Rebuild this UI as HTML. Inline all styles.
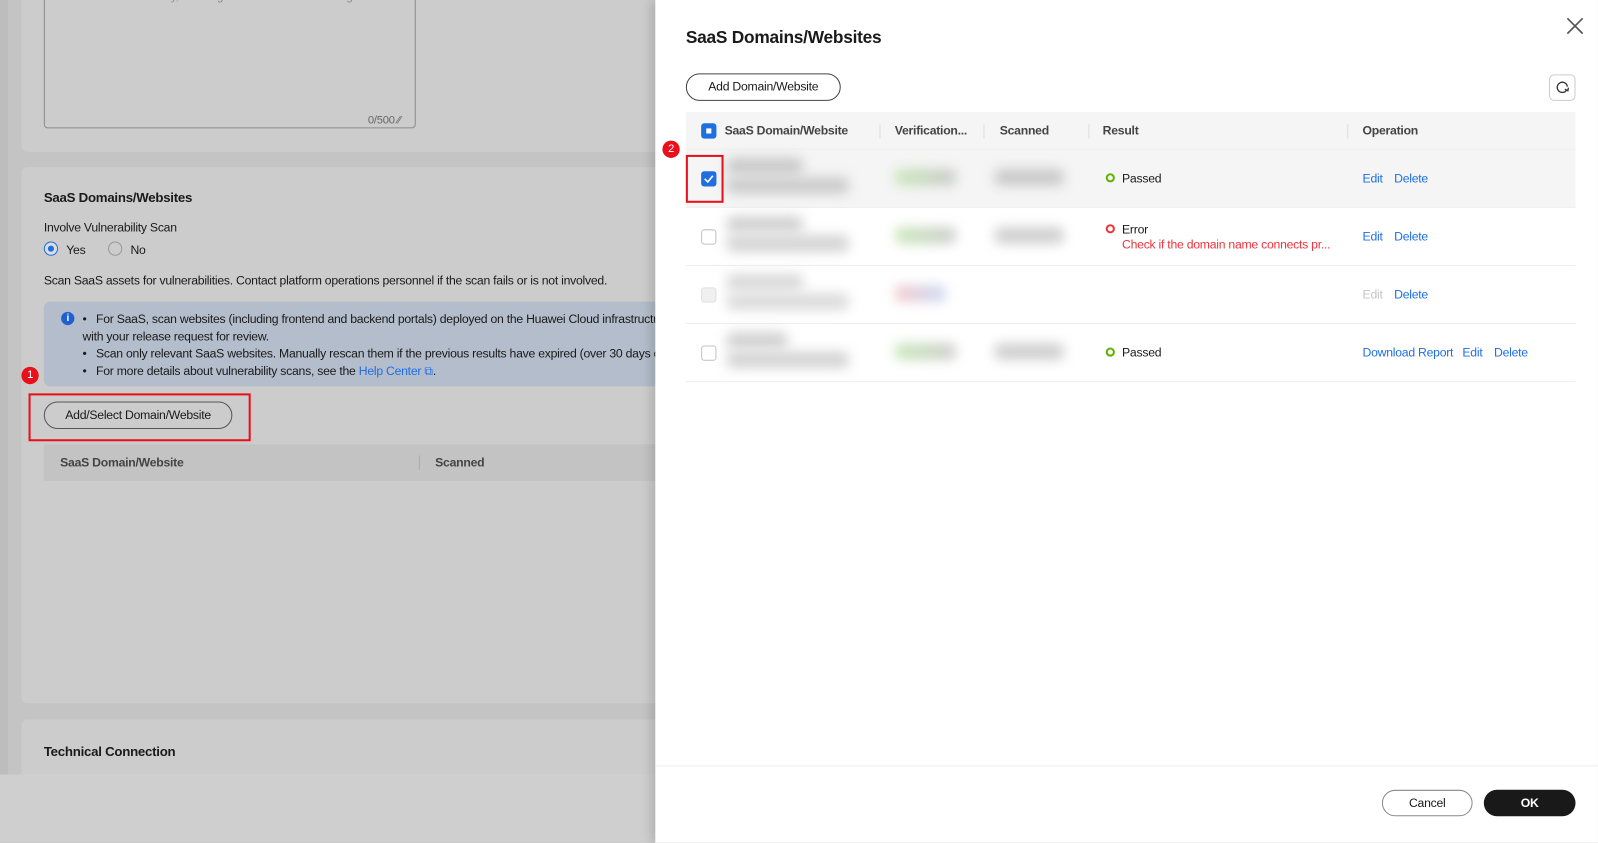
<!DOCTYPE html>
<html><head><meta charset="utf-8"><style>
*{box-sizing:border-box;margin:0;padding:0}
html,body{width:1598px;height:843px;overflow:hidden;background:#c4c4c4}
body{font-family:"Liberation Sans",Arial,sans-serif;font-size:12px;color:#1a1a1a;letter-spacing:-0.25px}
#w{position:absolute;left:0;top:0;width:1568px;height:827px;transform:scale(1.0191);transform-origin:0 0}
.a{position:absolute}
.card{position:absolute;left:21px;width:640px;background:#cccccc;border-radius:6px}
.t{position:absolute;white-space:nowrap}
.blur{position:absolute;filter:blur(6px);border-radius:6px}
.cb{position:absolute;width:15px;height:15px;border:1px solid #c2c2c2;border-radius:3px;background:#fff}
.link{color:#1f6fe0}
.sep{position:absolute;width:1px;height:14px;background:#ddd;top:12px}
</style></head><body><div id="w">
<div class="a" style="left:0;top:0;width:8px;height:827px;background:#bdbdbd"></div>
<!-- card1 -->
<div class="card" style="top:-10px;height:159px"></div>
<div class="a" style="left:43px;top:-10px;width:365px;height:136px;border:1px solid #8c8c8c;border-radius:4px"></div>
<div class="t" style="left:56px;top:-9px;color:#888;font-size:11px">Describe the asset briefly, including its core functions and usage.</div>
<div class="t" style="left:361px;top:112px;color:#666;font-size:11px">0/500 ⁄⁄</div>
<!-- card2 -->
<div class="card" style="top:164px;height:526px"></div>
<div class="t" style="left:43px;top:186px;font-weight:bold;font-size:13px">SaaS Domains/Websites</div>
<div class="t" style="left:43px;top:216px">Involve Vulnerability Scan</div>
<div class="a" style="left:43px;top:237px;width:14px;height:14px;border:1px solid #1f6fe0;border-radius:50%;background:#ddd"></div>
<div class="a" style="left:47px;top:241px;width:6px;height:6px;border-radius:50%;background:#1f6fe0"></div>
<div class="t" style="left:65px;top:238px">Yes</div>
<div class="a" style="left:106px;top:237px;width:14px;height:14px;border:1px solid #999;border-radius:50%"></div>
<div class="t" style="left:128px;top:238px">No</div>
<div class="t" style="left:43px;top:268px">Scan SaaS assets for vulnerabilities. Contact platform operations personnel if the scan fails or is not involved.</div>
<div class="a" style="left:43px;top:296px;width:610px;height:83px;background:#b3bdcb;border-radius:6px"></div>
<div class="a" style="left:60px;top:306px;width:13px;height:13px;border-radius:50%;background:#1f5fcf;color:#fff;font-size:10px;font-weight:bold;text-align:center;line-height:13px">i</div>
<div class="t" style="left:81px;top:306px">•&nbsp;&nbsp;&nbsp;For SaaS, scan websites (including frontend and backend portals) deployed on the Huawei Cloud infrastructure</div>
<div class="t" style="left:81px;top:323px">with your release request for review.</div>
<div class="t" style="left:81px;top:340px">•&nbsp;&nbsp;&nbsp;Scan only relevant SaaS websites. Manually rescan them if the previous results have expired (over 30 days old</div>
<div class="t" style="left:81px;top:357px">•&nbsp;&nbsp;&nbsp;For more details about vulnerability scans, see the <span class="link">Help Center ⧉</span>.</div>
<div class="a" style="left:21px;top:360px;width:17px;height:17px;border-radius:50%;background:#e8101a;color:#fff;font-size:11px;text-align:center;line-height:17px">1</div>
<div class="a" style="left:28px;top:386px;width:218px;height:47px;border:2px solid #e8101a"></div>
<div class="a" style="left:43px;top:394px;width:185px;height:27px;border:1px solid #555;border-radius:14px;text-align:center;line-height:25px">Add/Select Domain/Website</div>
<div class="a" style="left:43px;top:436px;width:610px;height:36px;background:#c3c3c3"></div>
<div class="t" style="left:59px;top:447px;font-weight:bold;color:#444">SaaS Domain/Website</div>
<div class="a" style="left:411px;top:447px;width:1px;height:14px;background:#aaa"></div>
<div class="t" style="left:427px;top:447px;font-weight:bold;color:#444">Scanned</div>
<!-- card3 -->
<div class="card" style="top:706px;height:60px"></div>
<div class="t" style="left:43px;top:730px;font-weight:bold;font-size:13px">Technical Connection</div>
<div class="a" style="left:0;top:760px;width:643px;height:67px;background:#cfcfcf"></div>
<!-- panel -->
<div class="a" style="left:643px;top:0;width:925px;height:827px;background:#fff;box-shadow:-4px 0 10px rgba(0,0,0,.15)"></div>
<div class="t" style="left:673px;top:27px;font-weight:bold;font-size:17px">SaaS Domains/Websites</div>
<svg class="a" style="left:1537px;top:17px" width="17" height="17"><path d="M1 1L16 16M16 1L1 16" stroke="#555" stroke-width="1.6"/></svg>
<div class="a" style="left:673px;top:72px;width:152px;height:27px;border:1px solid #444;border-radius:14px;text-align:center;line-height:25px">Add Domain/Website</div>
<div class="a" style="left:1520px;top:73px;width:26px;height:26px;border:1px solid #ccc;border-radius:5px"></div>
<svg class="a" style="left:1526px;top:79px" width="14" height="14"><path d="M11.5 9A5 5 0 1 1 12 6" fill="none" stroke="#333" stroke-width="1.3"/><path d="M9.5 8.5L12.5 10L13 7" fill="none" stroke="#333" stroke-width="1.3"/></svg>
<div class="a" style="left:673px;top:110px;width:873px;height:37px;background:#f5f5f5;border-bottom:1px solid #eee">
  <div class="a" style="left:15px;top:11px;width:15px;height:15px;background:#1f6fe0;border-radius:3px"></div>
  <div class="a" style="left:20px;top:16px;width:5px;height:5px;background:#fff"></div>
  <div class="t" style="left:38px;top:11px;font-weight:bold;color:#444">SaaS Domain/Website</div>
  <div class="sep" style="left:190px"></div>
  <div class="t" style="left:205px;top:11px;font-weight:bold;color:#444">Verification...</div>
  <div class="sep" style="left:292px"></div>
  <div class="t" style="left:308px;top:11px;font-weight:bold;color:#444">Scanned</div>
  <div class="sep" style="left:395px"></div>
  <div class="t" style="left:409px;top:11px;font-weight:bold;color:#444">Result</div>
  <div class="sep" style="left:649px"></div>
  <div class="t" style="left:664px;top:11px;font-weight:bold;color:#444">Operation</div>
</div>
<!-- rows -->
<div class="a" style="left:673px;top:147px;width:873px;height:57px;background:#f5f5f5;border-bottom:1px solid #eee"></div>
<div class="a" style="left:673px;top:204px;width:873px;height:57px;border-bottom:1px solid #eee"></div>
<div class="a" style="left:673px;top:261px;width:873px;height:57px;border-bottom:1px solid #eee"></div>
<div class="a" style="left:673px;top:318px;width:873px;height:57px;border-bottom:1px solid #eee"></div>
<!-- blurred blobs -->
<div class="blur" style="left:713px;top:155px;width:75px;height:16px;background:#c8c8c8"></div>
<div class="blur" style="left:713px;top:174px;width:120px;height:16px;background:#cacaca"></div>
<div class="blur" style="left:878px;top:166px;width:60px;height:16px;background:linear-gradient(90deg,#c8e8b8,#c8c8c8)"></div>
<div class="blur" style="left:976px;top:166px;width:68px;height:16px;background:#c8c8c8"></div>
<div class="blur" style="left:713px;top:212px;width:75px;height:16px;background:#d0d0d0"></div>
<div class="blur" style="left:713px;top:231px;width:120px;height:16px;background:#d2d2d2"></div>
<div class="blur" style="left:878px;top:223px;width:60px;height:16px;background:linear-gradient(90deg,#c8e8b8,#cccccc)"></div>
<div class="blur" style="left:976px;top:223px;width:68px;height:16px;background:#cecece"></div>
<div class="blur" style="left:713px;top:269px;width:75px;height:16px;background:#d8d8d8"></div>
<div class="blur" style="left:713px;top:288px;width:120px;height:16px;background:#dadada"></div>
<div class="blur" style="left:878px;top:280px;width:50px;height:16px;background:linear-gradient(90deg,#f4c8c8,#c8d8f6)"></div>
<div class="blur" style="left:713px;top:326px;width:60px;height:16px;background:#d0d0d0"></div>
<div class="blur" style="left:713px;top:345px;width:120px;height:16px;background:#d2d2d2"></div>
<div class="blur" style="left:878px;top:337px;width:60px;height:16px;background:linear-gradient(90deg,#c8e8b8,#cccccc)"></div>
<div class="blur" style="left:976px;top:337px;width:68px;height:16px;background:#cecece"></div>
<!-- checkboxes -->
<div class="a" style="left:688px;top:168px;width:15px;height:15px;background:#1f6fe0;border-radius:3px"></div>
<svg class="a" style="left:688px;top:168px" width="15" height="15"><path d="M3.5 7.5L6.5 10.5L11.5 4.5" fill="none" stroke="#fff" stroke-width="1.6"/></svg>
<div class="cb" style="left:688px;top:225px"></div>
<div class="cb" style="left:688px;top:282px;background:#f0f0f0;border-color:#e0e0e0"></div>
<div class="cb" style="left:688px;top:339px"></div>
<div class="a" style="left:673px;top:152px;width:37px;height:47px;border:2px solid #e8101a"></div>
<div class="a" style="left:650px;top:138px;width:17px;height:17px;border-radius:50%;background:#e8101a;color:#fff;font-size:11px;text-align:center;line-height:17px">2</div>
<!-- results -->
<div class="a" style="left:1085px;top:170px;width:9px;height:9px;border:2px solid #5cb300;border-radius:50%"></div>
<div class="t" style="left:1101px;top:168px">Passed</div>
<div class="a" style="left:1085px;top:220px;width:9px;height:9px;border:2px solid #f0343c;border-radius:50%"></div>
<div class="t" style="left:1101px;top:218px">Error</div>
<div class="t" style="left:1101px;top:233px;color:#f0343c">Check if the domain name connects pr...</div>
<div class="a" style="left:1085px;top:341px;width:9px;height:9px;border:2px solid #5cb300;border-radius:50%"></div>
<div class="t" style="left:1101px;top:339px">Passed</div>
<div class="t link" style="left:1337px;top:168px">Edit</div><div class="t link" style="left:1368px;top:168px">Delete</div>
<div class="t link" style="left:1337px;top:225px">Edit</div><div class="t link" style="left:1368px;top:225px">Delete</div>
<div class="t" style="left:1337px;top:282px;color:#c4c4c4">Edit</div><div class="t link" style="left:1368px;top:282px">Delete</div>
<div class="t link" style="left:1337px;top:339px">Download Report</div><div class="t link" style="left:1435px;top:339px">Edit</div><div class="t link" style="left:1466px;top:339px">Delete</div>
<!-- footer -->
<div class="a" style="left:643px;top:751px;width:925px;height:1px;background:#eee"></div>
<div class="a" style="left:1356px;top:775px;width:89px;height:26px;border:1px solid #888;border-radius:13px;text-align:center;line-height:24px">Cancel</div>
<div class="a" style="left:1456px;top:775px;width:90px;height:26px;background:#191919;color:#fff;border-radius:13px;text-align:center;line-height:26px;font-weight:bold">OK</div>
</div></body></html>
